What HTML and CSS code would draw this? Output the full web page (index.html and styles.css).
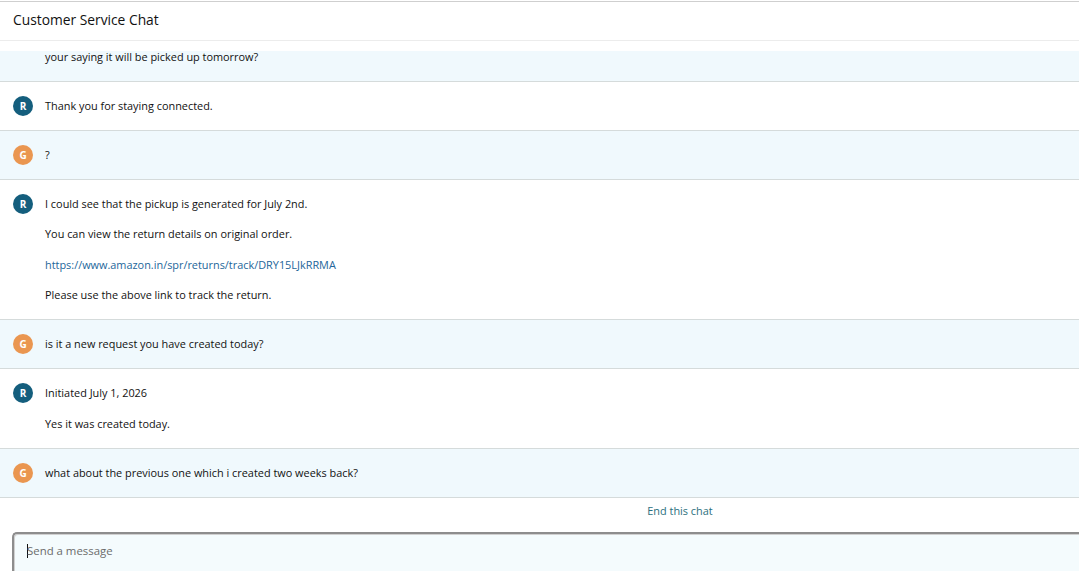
FILE: index.html
```html
<!DOCTYPE html>
<html>
<head>
<meta charset="utf-8">
<link rel="stylesheet" href="styles.css">
</head>
<body>
<div class="page">
  <header class="chat-header">Customer Service Chat</header>
  <div class="messages">
    <div class="msg guest">
      <span class="avatar g clipped">G</span>
      <div class="lines">
        <p class="clipped">when the previous return is already scheduled why are</p>
        <p>your saying it will be picked up tomorrow?</p>
      </div>
    </div>
    <div class="msg rep">
      <span class="avatar r">R</span>
      <div class="lines"><p>Thank you for staying connected.</p></div>
    </div>
    <div class="msg guest">
      <span class="avatar g">G</span>
      <div class="lines"><p>?</p></div>
    </div>
    <div class="msg rep">
      <span class="avatar r">R</span>
      <div class="lines">
        <p>I could see that the pickup is generated for July 2nd.</p>
        <p>You can view the return details on original order.</p>
        <p><a class="link" href="#">https://www.amazon.in/spr/returns/track/DRY15LJkRRMA</a></p>
        <p>Please use the above link to track the return.</p>
      </div>
    </div>
    <div class="msg guest">
      <span class="avatar g">G</span>
      <div class="lines"><p>is it a new request you have created today?</p></div>
    </div>
    <div class="msg rep">
      <span class="avatar r">R</span>
      <div class="lines two">
        <p>Initiated July 1, 2026</p>
        <p>Yes it was created today.</p>
      </div>
    </div>
    <div class="msg guest">
      <span class="avatar g">G</span>
      <div class="lines"><p>what about the previous one which i created two weeks back?</p></div>
    </div>
  </div>
  <div class="footer">
    <a class="end" href="#">End this chat</a>
  </div>
  <div class="composer">
    <div class="input"><span class="caret"></span><span class="placeholder">Send a message</span></div>
  </div>
</div>
</body>
</html>
```
FILE: styles.css
```css
html, body {
  margin: 0;
  padding: 0;
  background: #fff;
  overflow: hidden;
}
body {
  font-family: "Open Sans", "Noto Sans", sans-serif;
  color: #111;
}
.page {
  width: 1360px;
  height: 571px;
  padding-top: 1px;
  box-sizing: border-box;
}
.chat-header {
  border-top: 1px solid #cfcfcf;
  height: 38px;
  line-height: 36px;
  padding-left: 13px;
  font-size: 13.8px;
  color: #111;
  border-bottom: 1px solid #ececec;
}
.messages {
  border-top: 10px solid #fff;
  height: 447px;
  overflow: hidden;
  display: flex;
  flex-direction: column;
  justify-content: flex-end;
}
.clipped {
  visibility: hidden;
}
.msg {
  flex: none;
  display: flex;
  align-items: flex-start;
  padding: 15px 0 15px 13px;
  border-bottom: 1px solid #d5dbdb;
}
.msg.guest {
  background: #f0f9fd;
}
.avatar {
  flex: none;
  width: 20px;
  height: 20px;
  border-radius: 50%;
  color: #fff;
  font-size: 10px;
  font-weight: 700;
  display: flex;
  align-items: center;
  justify-content: center;
  margin: -1px 12px -1px 0;
}
.avatar.r { background: #145e7d; }
.avatar.g { background: #ea9650; }
.lines {
  display: flex;
  flex-direction: column;
  gap: 12.3px;
}
.lines.two {
  gap: 13px;
}
.lines p {
  margin: 0;
  font-size: 10.9px;
  line-height: 18px;
  height: 18px;
  color: #111;
  white-space: nowrap;
}
.link {
  color: #23669a;
  text-decoration: none;
}
.footer {
  height: 34px;
  display: flex;
  justify-content: center;
  align-items: center;
}
.end {
  color: #2b6f7d;
  font-size: 10.9px;
  text-decoration: none;
  margin-top: -9px;
}
.composer {
  padding-left: 12px;
}
.input {
  height: 60px;
  border: 2px solid #8d8d8d;
  border-right: none;
  border-bottom: none;
  border-radius: 5px 0 0 0;
  background: #f4fbfd;
  box-shadow: inset 1px 1px 0 #d0d0d0;
  display: flex;
  align-items: flex-start;
  padding: 9px 0 0 13px;
  box-sizing: border-box;
}
.caret {
  width: 1px;
  height: 14px;
  background: #111;
  margin-top: 1px;
}
.placeholder {
  color: #6b6b6b;
  font-size: 11.4px;
  line-height: 16px;
  margin-left: -1px;
}
```
